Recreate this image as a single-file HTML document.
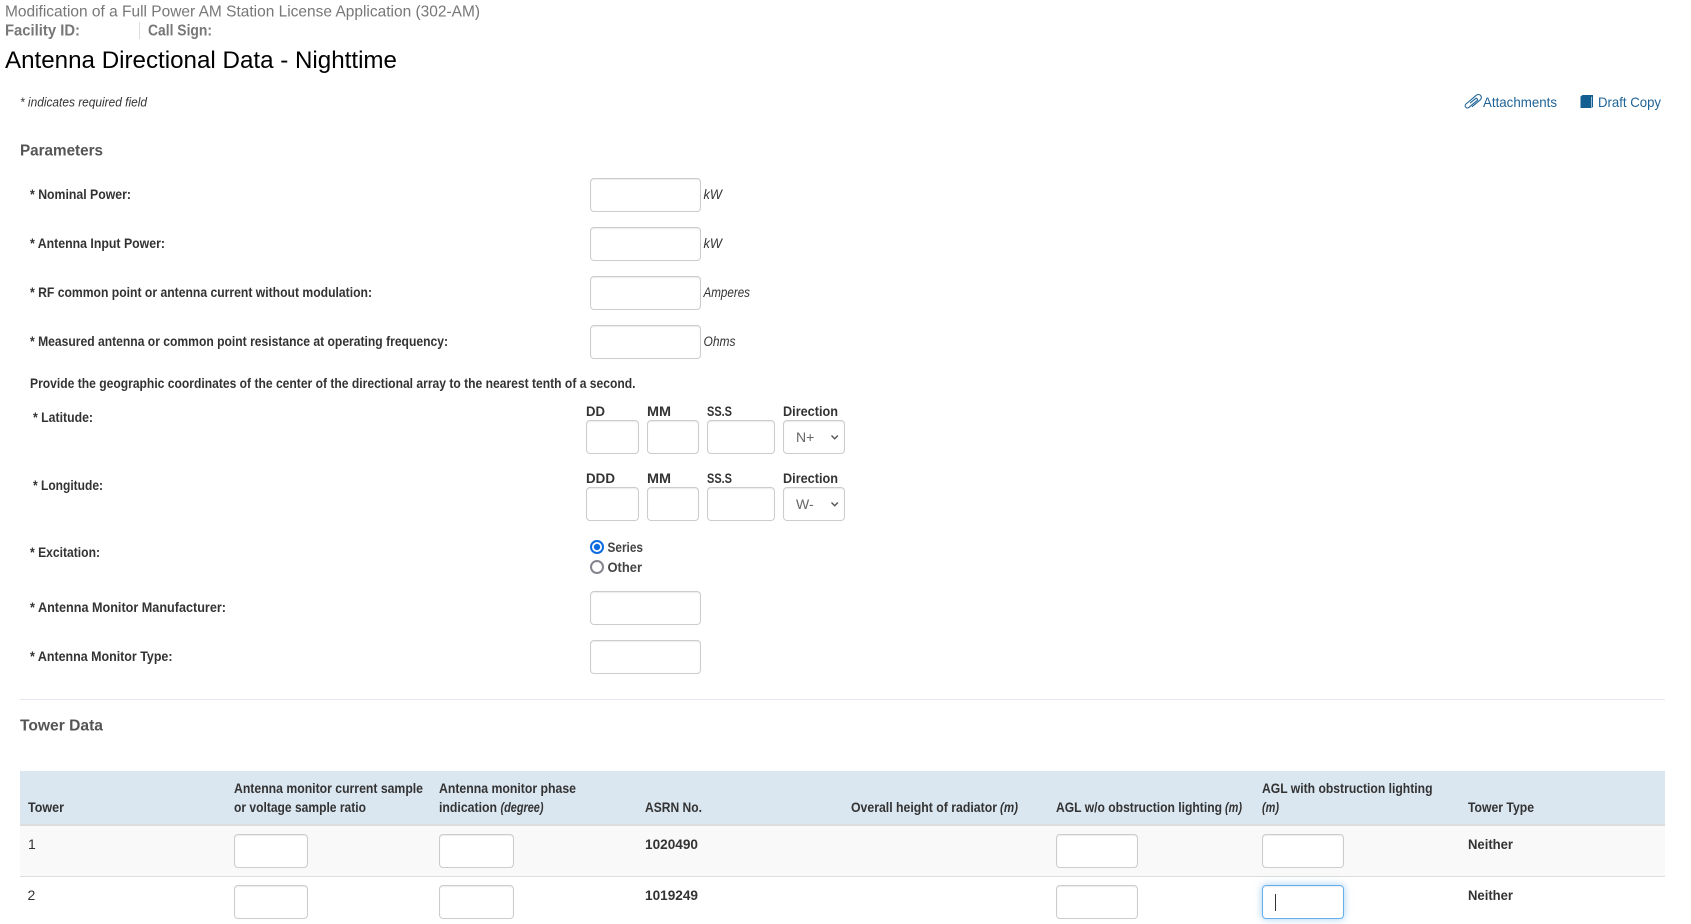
<!DOCTYPE html>
<html lang="en">
<head>
<meta charset="utf-8">
<title>Antenna Directional Data - Nighttime</title>
<style>
html,body{margin:0;padding:0;background:#fff;width:1691px;height:924px;overflow:hidden}
body{position:relative;font-family:"Liberation Sans",sans-serif}
input.t,select{position:absolute;box-sizing:border-box;height:34px;border:1px solid #ccc;border-radius:4px;background:#fff;box-shadow:inset 0 1px 1px rgba(0,0,0,.075);margin:0;padding:0;outline:none}
select{appearance:none;-webkit-appearance:none;font:14px "Liberation Sans",sans-serif;color:#666;padding-left:12px}
input.f{border-color:#66afe9;box-shadow:inset 0 1px 1px rgba(0,0,0,.075),0 0 8px rgba(102,175,233,.6)}
input[type=radio]{appearance:none;-webkit-appearance:none;position:absolute;box-sizing:border-box;width:14px;height:14px;margin:0;border-radius:50%;border:2px solid #85858f;background:#fff}
input[type=radio]:checked{border-color:#0b6be0;background:radial-gradient(circle,#0b6be0 0,#0b6be0 2.8px,#fff 3.5px)}
.b{position:absolute}
svg.o{position:absolute;left:0;top:0;pointer-events:none}
text{font-family:"Liberation Sans",sans-serif;font-size:14px;fill:#333;white-space:pre}
.l{font-weight:bold}
.i{font-style:italic}
.h{font-weight:bold;font-size:16px;fill:#555}
.g{font-size:16px;fill:#777}
.a{fill:#1f6396;font-size:14px}
</style>
</head>
<body>
<div class="b" style="left:139px;top:22px;width:1px;height:17px;background:#ddd"></div>
<div class="b" style="left:20px;top:699px;width:1645px;height:1px;background:#e3e9ee"></div>
<div class="b" style="left:20px;top:771px;width:1645px;height:53px;background:#dae6f0"></div>
<div class="b" style="left:20px;top:824px;width:1645px;height:2px;background:#ddd"></div>
<div class="b" style="left:20px;top:826px;width:1645px;height:50px;background:#f9f9f9"></div>
<div class="b" style="left:20px;top:876px;width:1645px;height:1px;background:#ddd"></div>

<input class="t" style="left:590px;top:178px;width:111px">
<input class="t" style="left:590px;top:227px;width:111px">
<input class="t" style="left:590px;top:276px;width:111px">
<input class="t" style="left:590px;top:325px;width:111px">

<input class="t" style="left:586px;top:420px;width:53px">
<input class="t" style="left:647px;top:420px;width:52px">
<input class="t" style="left:707px;top:420px;width:68px">
<select style="left:783px;top:420px;width:62px"><option>N+</option></select>

<input class="t" style="left:586px;top:487px;width:53px">
<input class="t" style="left:647px;top:487px;width:52px">
<input class="t" style="left:707px;top:487px;width:68px">
<select style="left:783px;top:487px;width:62px"><option>W-</option></select>

<input type="radio" name="e" checked style="left:590px;top:540px">
<input type="radio" name="e" style="left:590px;top:560px">

<input class="t" style="left:590px;top:591px;width:111px">
<input class="t" style="left:590px;top:640px;width:111px">

<input class="t" style="left:234px;top:834px;width:74px">
<input class="t" style="left:439px;top:834px;width:75px">
<input class="t" style="left:1056px;top:834px;width:82px">
<input class="t" style="left:1262px;top:834px;width:82px">
<input class="t" style="left:234px;top:885px;width:74px">
<input class="t" style="left:439px;top:885px;width:75px">
<input class="t" style="left:1056px;top:885px;width:82px">
<input class="t f" style="left:1262px;top:885px;width:82px">
<div class="b" style="left:1275px;top:894px;width:1px;height:17px;background:#333"></div>

<svg class="o" width="1691" height="924" viewBox="0 0 1691 924" xmlns="http://www.w3.org/2000/svg">
<text class="g" x="5" y="16.5" textLength="475" lengthAdjust="spacingAndGlyphs">Modification of a Full Power AM Station License Application (302-AM)</text>
<text class="g" style="font-weight:bold" x="5" y="35.5" textLength="75" lengthAdjust="spacingAndGlyphs">Facility ID:</text>
<text class="g" style="font-weight:bold" x="148" y="35.5" textLength="64" lengthAdjust="spacingAndGlyphs">Call Sign:</text>
<text style="font-size:24px;fill:#000" x="5" y="68" textLength="392" lengthAdjust="spacingAndGlyphs">Antenna Directional Data - Nighttime</text>
<text class="i" style="font-size:13px" x="20" y="106.5" textLength="127" lengthAdjust="spacingAndGlyphs">* indicates required field</text>

<text class="a" x="1483" y="107" textLength="74" lengthAdjust="spacingAndGlyphs">Attachments</text>
<text class="a" x="1598" y="107" textLength="63" lengthAdjust="spacingAndGlyphs">Draft Copy</text>

<text class="h" x="20" y="155.5" textLength="83" lengthAdjust="spacingAndGlyphs">Parameters</text>
<text class="l" x="30" y="199" textLength="101" lengthAdjust="spacingAndGlyphs">* Nominal Power:</text>
<text class="l" x="30" y="248" textLength="135" lengthAdjust="spacingAndGlyphs">* Antenna Input Power:</text>
<text class="l" x="30" y="297" textLength="342" lengthAdjust="spacingAndGlyphs">* RF common point or antenna current without modulation:</text>
<text class="l" x="30" y="346" textLength="418" lengthAdjust="spacingAndGlyphs">* Measured antenna or common point resistance at operating frequency:</text>
<text class="i" x="703.5" y="199" textLength="18.5" lengthAdjust="spacingAndGlyphs">kW</text>
<text class="i" x="703.5" y="248" textLength="18.5" lengthAdjust="spacingAndGlyphs">kW</text>
<text class="i" x="703.5" y="297" textLength="46.5" lengthAdjust="spacingAndGlyphs">Amperes</text>
<text class="i" x="703.5" y="346" textLength="32" lengthAdjust="spacingAndGlyphs">Ohms</text>

<text class="l" x="30" y="388" textLength="605.5" lengthAdjust="spacingAndGlyphs">Provide the geographic coordinates of the center of the directional array to the nearest tenth of a second.</text>
<text class="l" x="33" y="422" textLength="60" lengthAdjust="spacingAndGlyphs">* Latitude:</text>
<text class="l" x="33" y="490" textLength="70" lengthAdjust="spacingAndGlyphs">* Longitude:</text>
<text class="l" x="30" y="557" textLength="70" lengthAdjust="spacingAndGlyphs">* Excitation:</text>
<text class="l" x="30" y="612" textLength="196" lengthAdjust="spacingAndGlyphs">* Antenna Monitor Manufacturer:</text>
<text class="l" x="30" y="661" textLength="142.5" lengthAdjust="spacingAndGlyphs">* Antenna Monitor Type:</text>

<text class="l" x="586" y="416" textLength="19" lengthAdjust="spacingAndGlyphs">DD</text>
<text class="l" x="647" y="416" textLength="24" lengthAdjust="spacingAndGlyphs">MM</text>
<text class="l" x="707" y="416" textLength="25" lengthAdjust="spacingAndGlyphs">SS.S</text>
<text class="l" x="783" y="416" textLength="55" lengthAdjust="spacingAndGlyphs">Direction</text>
<text class="l" x="586" y="483" textLength="29" lengthAdjust="spacingAndGlyphs">DDD</text>
<text class="l" x="647" y="483" textLength="24" lengthAdjust="spacingAndGlyphs">MM</text>
<text class="l" x="707" y="483" textLength="25" lengthAdjust="spacingAndGlyphs">SS.S</text>
<text class="l" x="783" y="483" textLength="55" lengthAdjust="spacingAndGlyphs">Direction</text>

<text x="607.5" y="552" textLength="35.5" lengthAdjust="spacingAndGlyphs" style="font-weight:bold;fill:#444">Series</text>
<text x="607.5" y="572" textLength="34.5" lengthAdjust="spacingAndGlyphs" style="font-weight:bold;fill:#444">Other</text>

<text class="h" x="20" y="730.5" textLength="83" lengthAdjust="spacingAndGlyphs">Tower Data</text>

<text class="l" x="28" y="812" textLength="36" lengthAdjust="spacingAndGlyphs">Tower</text>
<text class="l" x="234" y="793" textLength="189" lengthAdjust="spacingAndGlyphs">Antenna monitor current sample</text>
<text class="l" x="234" y="812" textLength="132" lengthAdjust="spacingAndGlyphs">or voltage sample ratio</text>
<text class="l" x="439" y="793" textLength="137" lengthAdjust="spacingAndGlyphs">Antenna monitor phase</text>
<text class="l" x="439" y="812" textLength="58" lengthAdjust="spacingAndGlyphs">indication</text>
<text class="l i" x="500.5" y="812" textLength="43" lengthAdjust="spacingAndGlyphs">(degree)</text>
<text class="l" x="645" y="812" textLength="57" lengthAdjust="spacingAndGlyphs">ASRN No.</text>
<text class="l" x="851" y="812" textLength="146" lengthAdjust="spacingAndGlyphs">Overall height of radiator</text>
<text class="l i" x="1000" y="812" textLength="18" lengthAdjust="spacingAndGlyphs">(m)</text>
<text class="l" x="1056" y="812" textLength="166" lengthAdjust="spacingAndGlyphs">AGL w/o obstruction lighting</text>
<text class="l i" x="1225" y="812" textLength="17" lengthAdjust="spacingAndGlyphs">(m)</text>
<text class="l" x="1262" y="793" textLength="170.5" lengthAdjust="spacingAndGlyphs">AGL with obstruction lighting</text>
<text class="l i" x="1262" y="812" textLength="17" lengthAdjust="spacingAndGlyphs">(m)</text>
<text class="l" x="1468" y="812" textLength="66" lengthAdjust="spacingAndGlyphs">Tower Type</text>

<text x="28" y="849">1</text>
<text x="27.5" y="900">2</text>
<text class="l" x="645" y="849" textLength="53" lengthAdjust="spacingAndGlyphs">1020490</text>
<text class="l" x="645" y="900" textLength="53" lengthAdjust="spacingAndGlyphs">1019249</text>
<text class="l" x="1468" y="849" textLength="45" lengthAdjust="spacingAndGlyphs">Neither</text>
<text class="l" x="1468" y="900" textLength="45" lengthAdjust="spacingAndGlyphs">Neither</text>

<g transform="translate(.5 1) rotate(-40 1472.5 101)">
<path d="M1469 104 H1479.5 a3 3 0 0 0 0 -6 H1465.8 a2.25 2.25 0 0 0 0 4.5 H1476.5 a1.25 1.25 0 0 0 0 -2.5 H1470" fill="none" stroke="#1f6396" stroke-width="1.1" stroke-linecap="round"/>
</g>
<path d="M1580.5 96.5 L1582.5 95 L1593 95 L1593 107 L1591.5 108 L1580.5 108 Z" fill="#135f92"/>
<path d="M1591.4 96.8 V107.8" stroke="#dfeaf2" stroke-width=".7"/>
<path d="M831.5 435.5 L834.7 438.7 L837.9 435.5" fill="none" stroke="#555" stroke-width="1.4"/>
<path d="M831.5 502.5 L834.7 505.7 L837.9 502.5" fill="none" stroke="#555" stroke-width="1.4"/>
</svg>
</body>
</html>
